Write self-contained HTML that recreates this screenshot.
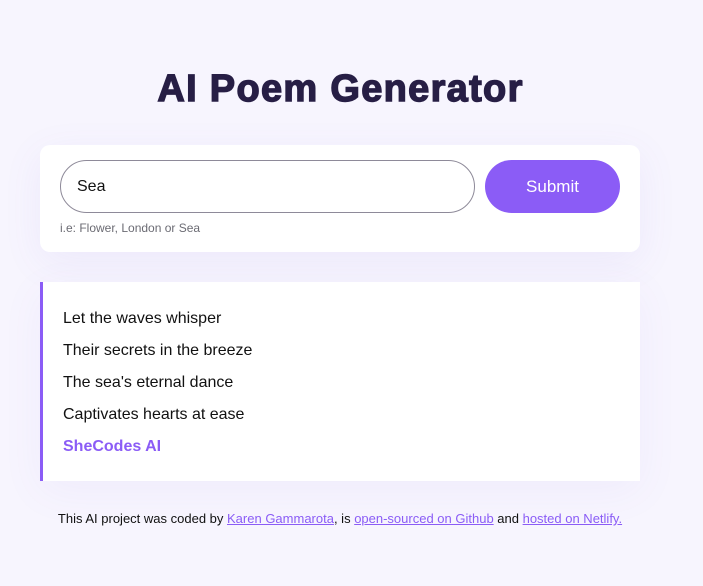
<!DOCTYPE html>
<html><head><style>
body{margin:0;background:#f7f5fe;font-family:"Liberation Sans",Arial,sans-serif;width:703px;height:586px;overflow:hidden;position:relative}
h1{position:absolute;top:66px;left:0;width:681px;text-align:center;margin:0;font-size:38px;font-weight:bold;color:#271e45;letter-spacing:1.3px;line-height:46px;-webkit-text-stroke:1.4px #271e45}
.form{position:absolute;left:40px;top:145px;width:600px;height:107px;background:#fff;border-radius:10px;box-shadow:0 10px 40px rgba(120,90,220,0.08)}
.inp{position:absolute;left:20px;top:15px;width:415px;height:53px;border:1px solid #8e8a99;border-radius:27px;box-sizing:border-box;font-size:16px;line-height:51px;padding-left:16px;color:#111}
.btn{position:absolute;left:445px;top:15px;width:135px;height:53px;background:#8b5cf6;border-radius:27px;color:#fff;font-size:17px;line-height:53px;text-align:center}
.hint{position:absolute;left:20px;top:76px;font-size:12px;color:#6b6b73}
.poem{position:absolute;left:40px;top:282px;width:600px;height:199px;background:#fff;border-left:3px solid #8b5cf6;box-sizing:border-box;box-shadow:0 10px 40px rgba(120,90,220,0.06)}
.poem div{position:absolute;left:20px;font-size:16px;color:#111}
.foot{position:absolute;top:511px;left:0;width:680px;text-align:center;font-size:13px;color:#111}
.foot a{color:#8b5cf6;text-decoration:underline}
</style></head><body>
<h1>AI Poem Generator</h1>
<div class="form"><div class="inp">Sea</div><div class="btn">Submit</div><div class="hint">i.e: Flower, London or Sea</div></div>
<div class="poem">
<div style="top:28px">Let the waves whisper</div>
<div style="top:60px">Their secrets in the breeze</div>
<div style="top:92px">The sea's eternal dance</div>
<div style="top:124px">Captivates hearts at ease</div>
<div style="top:156px;color:#8b5cf6;font-weight:bold">SheCodes AI</div>
</div>
<div class="foot">This AI project was coded by <a>Karen Gammarota</a>, is <a>open-sourced on Github</a> and <a>hosted on Netlify.</a></div>
</body></html>
